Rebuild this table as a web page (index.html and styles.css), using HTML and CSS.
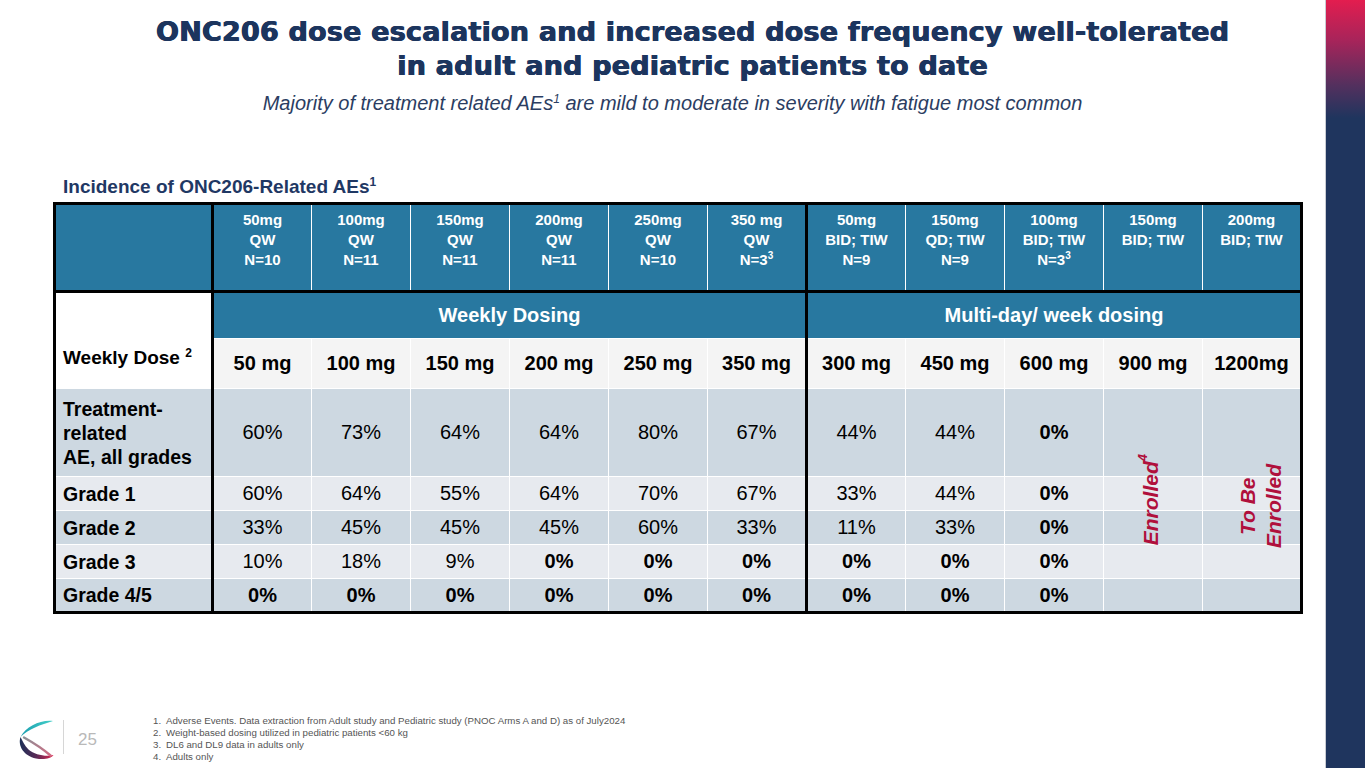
FILE: index.html
```html
<!DOCTYPE html>
<html lang="en">
<head>
<meta charset="utf-8">
<title>ONC206 dose escalation</title>
<link rel="stylesheet" href="styles.css">
</head>
<body>
<div class="slide">
  <main class="main">
    <header class="head">
      <h1 class="title">ONC206 dose escalation and increased dose frequency well-tolerated<br>in adult and pediatric patients to date</h1>
      <p class="subtitle">Majority of treatment related AEs<sup>1</sup> are mild to moderate in severity with fatigue most common</p>
    </header>

    <section class="tablewrap">
      <h2 class="caption">Incidence of ONC206-Related AEs<sup>1</sup></h2>
      <div class="tablebox">
        <table class="ae">
          <colgroup>
            <col class="c-label">
            <col span="11" class="c-data">
          </colgroup>
          <thead>
            <tr class="r-head">
              <th class="sep-r"></th>
              <th>50mg<br>QW<br>N=10</th>
              <th>100mg<br>QW<br>N=11</th>
              <th>150mg<br>QW<br>N=11</th>
              <th>200mg<br>QW<br>N=11</th>
              <th>250mg<br>QW<br>N=10</th>
              <th class="sep-r">350 mg<br>QW<br>N=3<sup>3</sup></th>
              <th>50mg<br>BID; TIW<br>N=9</th>
              <th>150mg<br>QD; TIW<br>N=9</th>
              <th>100mg<br>BID; TIW<br>N=3<sup>3</sup></th>
              <th>150mg<br>BID; TIW</th>
              <th>200mg<br>BID; TIW</th>
            </tr>
          </thead>
          <tbody>
            <tr class="r-group">
              <th rowspan="2" class="wlabel sep-r">Weekly Dose <sup>2</sup></th>
              <td colspan="6" class="sep-r">Weekly Dosing</td>
              <td colspan="5">Multi-day/ week dosing</td>
            </tr>
            <tr class="r-dose">
              <td>50 mg</td><td>100 mg</td><td>150 mg</td><td>200 mg</td><td>250 mg</td><td class="sep-r">350 mg</td>
              <td>300 mg</td><td>450 mg</td><td>600 mg</td><td>900 mg</td><td>1200mg</td>
            </tr>
            <tr class="r-dark r-tall">
              <th class="sep-r">Treatment-<br>related<br>AE, all grades</th>
              <td>60%</td><td>73%</td><td>64%</td><td>64%</td><td>80%</td><td class="sep-r">67%</td>
              <td>44%</td><td>44%</td><td class="b">0%</td><td></td><td></td>
            </tr>
            <tr class="r-light">
              <th class="sep-r">Grade 1</th>
              <td>60%</td><td>64%</td><td>55%</td><td>64%</td><td>70%</td><td class="sep-r">67%</td>
              <td>33%</td><td>44%</td><td class="b">0%</td><td></td><td></td>
            </tr>
            <tr class="r-dark">
              <th class="sep-r">Grade 2</th>
              <td>33%</td><td>45%</td><td>45%</td><td>45%</td><td>60%</td><td class="sep-r">33%</td>
              <td>11%</td><td>33%</td><td class="b">0%</td><td></td><td></td>
            </tr>
            <tr class="r-light">
              <th class="sep-r">Grade 3</th>
              <td>10%</td><td>18%</td><td>9%</td><td class="b">0%</td><td class="b">0%</td><td class="sep-r b">0%</td>
              <td class="b">0%</td><td class="b">0%</td><td class="b">0%</td><td></td><td></td>
            </tr>
            <tr class="r-dark">
              <th class="sep-r">Grade 4/5</th>
              <td class="b">0%</td><td class="b">0%</td><td class="b">0%</td><td class="b">0%</td><td class="b">0%</td><td class="sep-r b">0%</td>
              <td class="b">0%</td><td class="b">0%</td><td class="b">0%</td><td></td><td></td>
            </tr>
          </tbody>
        </table>
        <div class="vnote vnote-1">Enrolled<sup>4</sup></div>
        <div class="vnote vnote-2">To Be<br>Enrolled</div>
      </div>
    </section>

    <footer class="foot">
      <svg class="logo" width="40" height="46" viewBox="0 0 40 46" aria-hidden="true">
        <defs>
          <linearGradient id="gTeal" x1="0" y1="0" x2="1" y2="0">
            <stop offset="0" stop-color="#1a9fb0"/>
            <stop offset="1" stop-color="#45cfc8"/>
          </linearGradient>
          <linearGradient id="gLow" x1="0" y1="0" x2="1" y2="0">
            <stop offset="0" stop-color="#1c2f57"/>
            <stop offset="0.5" stop-color="#5a2a55"/>
            <stop offset="1" stop-color="#e0264f"/>
          </linearGradient>
          <linearGradient id="gMid" x1="0" y1="0" x2="1" y2="1">
            <stop offset="0" stop-color="#8c9096"/>
            <stop offset="1" stop-color="#d06a82"/>
          </linearGradient>
        </defs>
        <path d="M37 5 C 25 3.5, 10 10, 4.5 21 C 12 13.5, 25 8.5, 37 5 Z" fill="url(#gTeal)"/>
        <path d="M4.5 21 C 1.5 30, 8 40, 20 42.5 C 28 44, 35 42.5, 37.5 39 C 30 41, 19 39, 12.5 33.5 C 8.5 29.5, 6.5 25, 4.5 21 Z" fill="url(#gLow)"/>
        <path d="M8 21.5 C 16 26, 26 32, 34.5 39.5" fill="none" stroke="url(#gMid)" stroke-width="2.4" stroke-linecap="round"/>
      </svg>
      <span class="divider"></span>
      <span class="pagenum">25</span>
      <ol class="notes">
        <li><span class="num">1.</span>Adverse Events. Data extraction from Adult study and Pediatric study (PNOC Arms A and D) as of July2024</li>
        <li><span class="num">2.</span>Weight-based dosing utilized in pediatric patients &lt;60 kg</li>
        <li><span class="num">3.</span>DL6 and DL9 data in adults only</li>
        <li><span class="num">4.</span>Adults only</li>
      </ol>
    </footer>
  </main>
  <aside class="sidebar"></aside>
</div>
</body>
</html>
```

FILE: styles.css
```css
* { box-sizing: border-box; }
html, body { margin: 0; padding: 0; }
body {
  width: 1365px;
  height: 768px;
  overflow: hidden;
  background: #ffffff;
  font-family: "Liberation Sans", Arial, sans-serif;
  color: #000;
}
.slide {
  display: flex;
  width: 1365px;
  height: 768px;
}
.main {
  flex: 1;
  display: flex;
  flex-direction: column;
  min-width: 0;
}
.sidebar {
  width: 40px;
  flex: none;
  border-left: 1px solid #c9ccd3;
  background: linear-gradient(to bottom, #e31d4f 0px, #a8245a 40px, #54305e 85px, #1f355e 118px, #1f355e 100%);
}

/* header */
.head {
  padding-top: 15px;
  text-align: center;
}
.title {
  margin: 0;
  padding-left: 60px;
  font-family: "DejaVu Sans", "Liberation Sans", sans-serif;
  font-weight: bold;
  font-size: 27px;
  line-height: 34px;
  color: #1c355e;
  letter-spacing: 0.2px;
  text-shadow: 0.6px 0 0 #1c355e, -0.3px 0 0 #1c355e;
}
.subtitle {
  margin: 9px 0 0;
  padding-left: 20px;
  font-style: italic;
  font-size: 20px;
  line-height: 22px;
  color: #2b3d62;
}
.subtitle sup { font-size: 12px; vertical-align: 7px; line-height: 0; }

/* table */
.tablewrap {
  margin-top: 62px;
  padding-left: 53px;
}
.caption {
  margin: 0 0 4px 10px;
  font-size: 19px;
  line-height: 22px;
  font-weight: bold;
  color: #1f3864;
}
.caption sup { font-size: 12px; vertical-align: 7px; line-height: 0; }

.tablebox {
  position: relative;
  width: 1250px;
}
.ae {
  border-collapse: collapse;
  table-layout: fixed;
  width: 1250px;
  border: 3px solid #000;
  font-size: 20px;
}
.c-label { width: 158px; }
.c-data { width: 99px; }
.ae th, .ae td {
  border: 1.5px solid #ffffff;
  text-align: center;
  vertical-align: middle;
  padding: 0;
}
.ae .sep-r { border-right: 3px solid #000; }

.r-head th {
  background: #2878a0;
  color: #fff;
  font-size: 15px;
  line-height: 20px;
  font-weight: bold;
  height: 88px;
  vertical-align: top;
  padding-top: 5px;
  border-bottom: 3px solid #000;
  border-top: none;
}
.r-head sup { font-size: 10px; vertical-align: 6px; line-height: 0; }
.wlabel sup { font-size: 12px; vertical-align: 7px; line-height: 0; }

.r-group td {
  background: #2878a0;
  color: #fff;
  font-weight: bold;
  height: 47px;
}
.ae th.wlabel {
  background: #fff;
  text-align: left;
  vertical-align: bottom;
  padding: 0 0 19px 7px;
  font-size: 19px;
  font-weight: bold;
}
.r-dose td {
  background: #f4f4f4;
  font-weight: bold;
  height: 50px;
}
.r-dark td, .r-dark th { background: #cdd8e1; }
.r-light td, .r-light th { background: #e7eaef; }
.r-dark th, .r-light th {
  text-align: left;
  padding-left: 7px;
  font-weight: bold;
  font-size: 19.5px;
  line-height: 24px;
}
.r-dark td, .r-light td { height: 34px; font-weight: normal; }
.r-tall td, .r-tall th { height: 88px; }
.ae td.b { font-weight: bold; }

/* rotated overlay notes */
.vnote {
  position: absolute;
  writing-mode: vertical-rl;
  transform: rotate(180deg);
  color: #b0103c;
  font-weight: bold;
  font-style: italic;
  font-size: 21px;
  line-height: 26px;
  text-align: center;
}
.vnote sup { font-size: 13px; vertical-align: 8px; line-height: 0; }
.vnote-1 { left: 1085px; top: 252px; }
.vnote-2 { left: 1182px; top: 262px; }

/* footer */
.foot {
  margin-top: auto;
  display: flex;
  align-items: center;
  padding: 0 0 6px 16px;
  height: 56px;
}
.logo { flex: none; margin-top: 4px; }
.divider {
  width: 1px;
  height: 34px;
  background: #d6d6d6;
  margin-left: 7px;
}
.pagenum {
  margin-left: 14px;
  width: 40px;
  font-size: 17px;
  color: #b9b9b9;
  margin-top: 6px;
}
.notes {
  list-style: none;
  margin: 4px 0 0 35px;
  padding: 0;
  font-size: 9.7px;
  line-height: 12px;
  color: #555;
}
.notes li { display: flex; }
.notes .num { width: 13px; flex: none; }
```
